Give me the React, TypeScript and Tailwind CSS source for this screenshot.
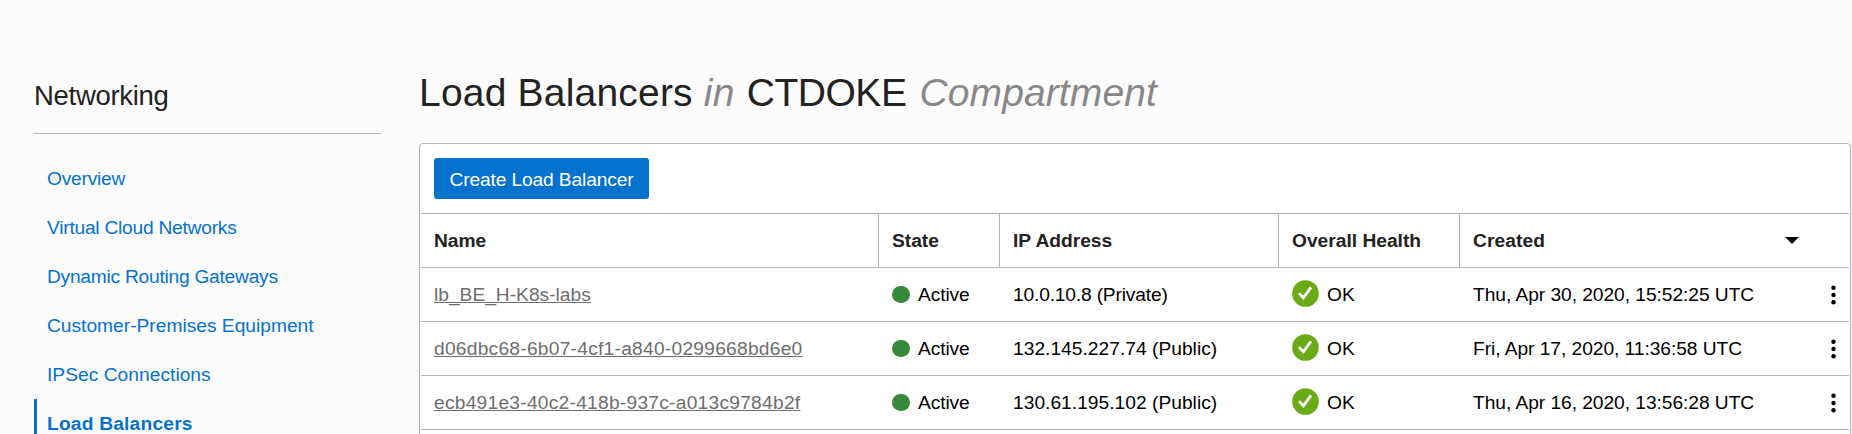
import React from "react";

const navItems = [
  { label: "Overview", tracking: "tracking-[-0.22px]" },
  { label: "Virtual Cloud Networks", tracking: "tracking-[-0.24px]" },
  { label: "Dynamic Routing Gateways", tracking: "tracking-[-0.25px]" },
  { label: "Customer-Premises Equipment", tracking: "tracking-normal" },
  { label: "IPSec Connections", tracking: "tracking-[0.03px]" },
];

const rows = [
  {
    name: "lb_BE_H-K8s-labs",
    nameTracking: "tracking-normal",
    ip: "10.0.10.8 (Private)",
    ipTracking: "tracking-[-0.17px]",
    created: "Thu, Apr 30, 2020, 15:52:25 UTC",
  },
  {
    name: "d06dbc68-6b07-4cf1-a840-0299668bd6e0",
    nameTracking: "tracking-[0.25px]",
    ip: "132.145.227.74 (Public)",
    ipTracking: "tracking-[0.02px]",
    created: "Fri, Apr 17, 2020, 11:36:58 UTC",
  },
  {
    name: "ecb491e3-40c2-418b-937c-a013c9784b2f",
    nameTracking: "tracking-[0.25px]",
    ip: "130.61.195.102 (Public)",
    ipTracking: "tracking-[0.02px]",
    created: "Thu, Apr 16, 2020, 13:56:28 UTC",
  },
];

const columns = "grid grid-cols-[458px_121px_279px_181px_1fr]";

function HealthIcon() {
  return (
    <svg className="mb-[2px] h-[27px] w-[27px] shrink-0" viewBox="0 0 27 27">
      <circle cx="13.5" cy="13.5" r="13.3" fill="#6aab15" />
      <path d="M7 13.2 L11.4 17.8 L19 7.4" fill="none" stroke="#fff" strokeWidth="2.8" />
    </svg>
  );
}

function KebabIcon() {
  return (
    <svg className="h-[20px] w-[6px]" viewBox="0 0 6 20">
      <circle cx="3.5" cy="2.7" r="2.2" />
      <circle cx="3.5" cy="10" r="2.2" />
      <circle cx="3.5" cy="17.3" r="2.2" />
    </svg>
  );
}

export default function App() {
  return (
    <div className="flex h-[434px] w-[1852px] overflow-hidden bg-[#fcfcfc] font-['Liberation_Sans',Arial,sans-serif] text-[19.2px] leading-[25px] whitespace-nowrap text-black">
      <aside className="ml-[34px] w-[347px] shrink-0 pt-[77px]">
        <h2 className="h-[57px] border-b border-[#b3b6be] text-[27.5px] leading-[37px] tracking-[-0.3px] text-[#222]">
          Networking
        </h2>
        <nav className="pt-[20px]">
          {navItems.map((item) => (
            <a key={item.label} className={`flex h-[49px] items-center pl-[13px] text-[#0572ce] ${item.tracking}`}>
              {item.label}
            </a>
          ))}
          <a className="flex h-[49px] items-center border-l-[3px] border-[#0572ce] pl-[10px] font-bold tracking-[0.2px] text-[#0572ce]">
            Load Balancers
          </a>
        </nav>
      </aside>

      <main className="ml-[38px] w-[1432px] shrink-0">
        <h1 className="h-[143px] pt-[68px] text-[39px] leading-[49px] tracking-[0.2px] text-[#222]">
          Load Balancers <em className="text-[#888]">in</em>{" "}
          <span className="ml-[1px] tracking-[-0.45px]">CTDOKE</span>{" "}
          <em className="ml-[2px] tracking-[0.1px] text-[#888]">Compartment</em>
        </h1>
        <section className="h-[300px] rounded-[4px] border border-[#b3b6be] bg-white px-px">
          <div className="flex h-[70px] items-start border-b border-[#b3b6be] pt-[14px] pl-[13px]">
            <button className="h-[41px] w-[215px] rounded-[3px] bg-[#0572ce] pt-[2px] tracking-[-0.13px] text-white">
              Create Load Balancer
            </button>
          </div>
          <div className={`${columns} h-[54px] border-b border-[#b3b6be] font-bold text-[#222]`}>
            <div className="flex items-center border-r border-[#b3b6be] pl-[13px]">Name</div>
            <div className="flex items-center border-r border-[#b3b6be] pl-[13px]">State</div>
            <div className="flex items-center border-r border-[#b3b6be] pl-[13px]">IP Address</div>
            <div className="flex items-center border-r border-[#b3b6be] pl-[13px]">Overall Health</div>
            <div className="flex items-center justify-between pr-[50px] pl-[13px] tracking-[0.1px]">
              Created
              <svg className="h-[7px] w-[14px] fill-black" viewBox="0 0 14 7">
                <path d="M0 0H14L7 7Z" />
              </svg>
            </div>
          </div>
          {rows.map((row) => (
            <div key={row.name} className={`${columns} h-[54px] items-center border-b border-[#b3b6be]`}>
              <div className={`pl-[13px] text-[#6e6e6e] ${row.nameTracking}`}>
                <a className="underline decoration-1 underline-offset-[1px] [text-decoration-skip-ink:none]">{row.name}</a>
              </div>
              <div className="flex items-center gap-[8px] pl-[13px] tracking-[-0.1px]">
                <span className="h-[17px] w-[18px] rounded-full bg-[#36893a]" />
                Active
              </div>
              <div className={`pl-[13px] ${row.ipTracking}`}>{row.ip}</div>
              <div className="flex h-[53px] items-center gap-[8px] pl-[13px]">
                <HealthIcon />
                OK
              </div>
              <div className="flex items-center justify-between pr-[13px] pl-[13px] tracking-[-0.05px]">
                {row.created}
                <KebabIcon />
              </div>
            </div>
          ))}
        </section>
      </main>
    </div>
  );
}
